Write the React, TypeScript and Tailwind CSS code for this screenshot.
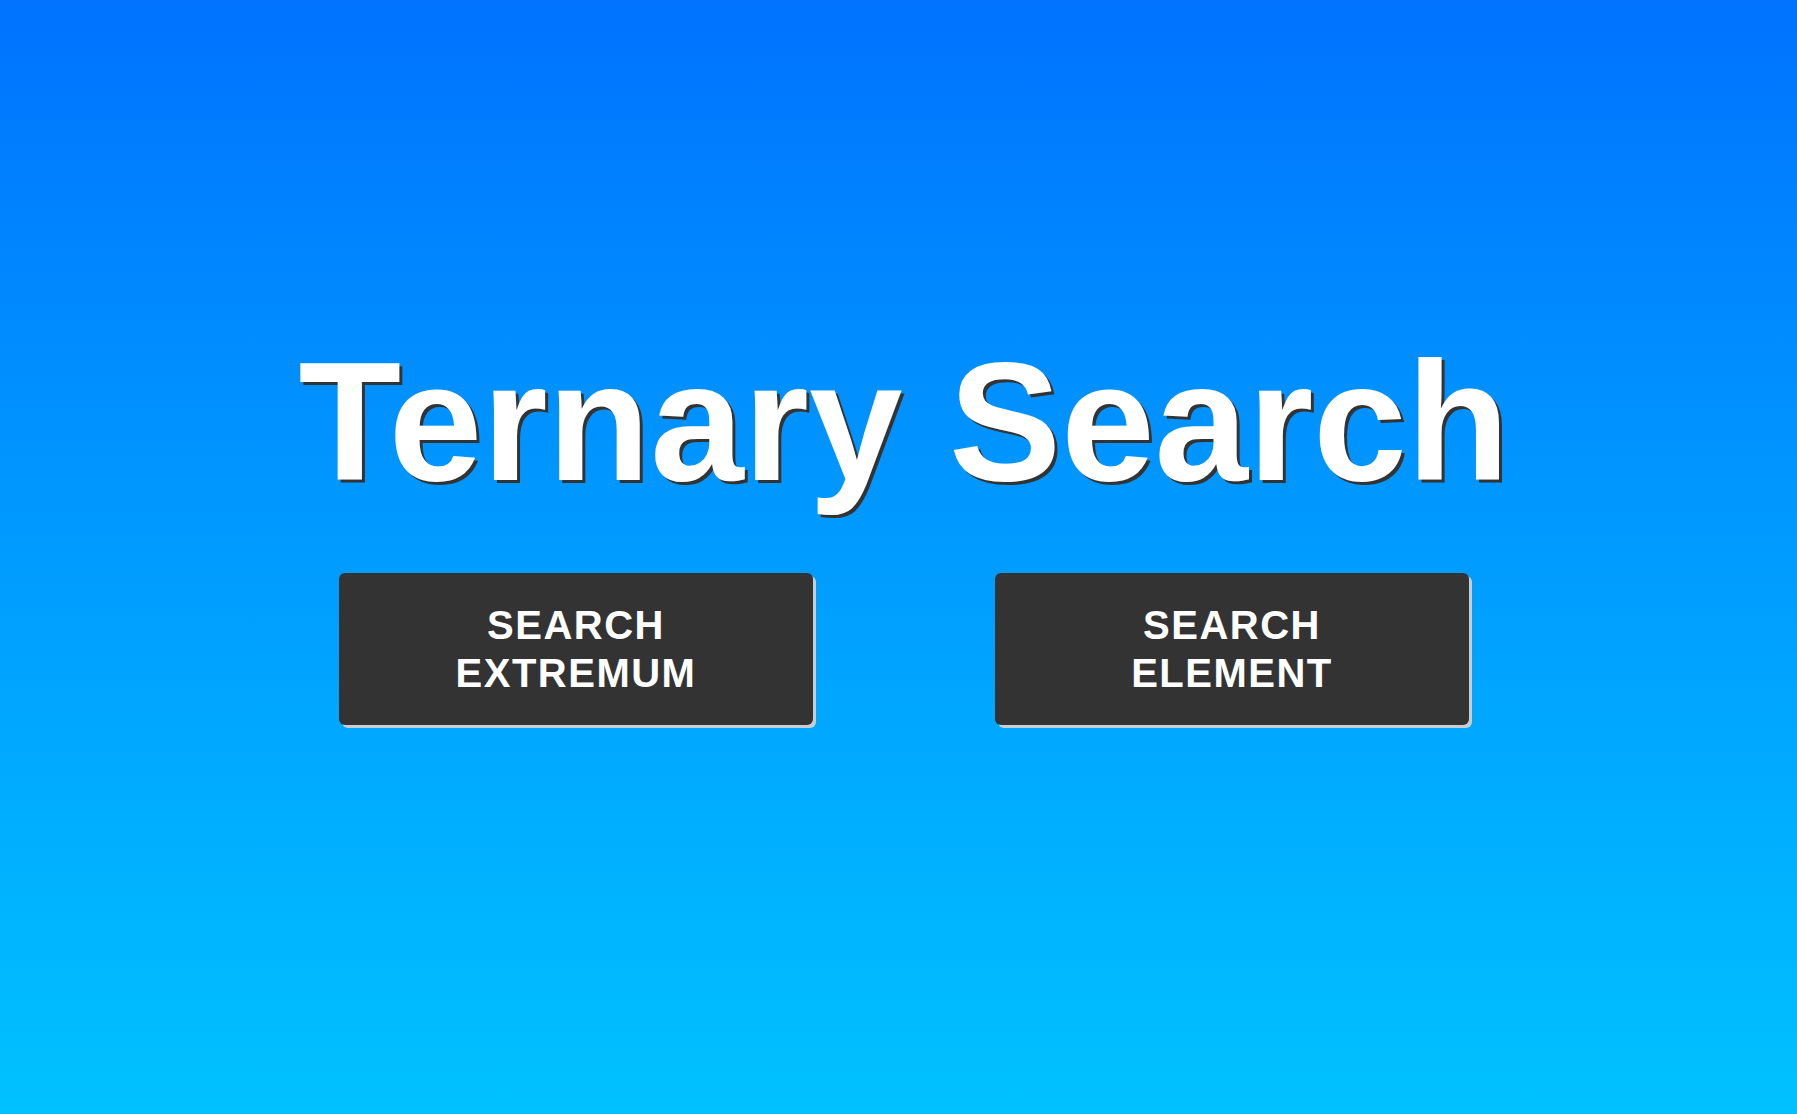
import React from 'react'

const MenuButton = ({ label }: { label: string }) => {
  return (
    <button
      type="button"
      className="w-[474px] h-[152px] rounded-[6px] bg-[#333333] text-white text-[40px] leading-[48px] font-bold tracking-[1.5px] shadow-[3px_3px_0_#c8cdd2] flex items-center justify-center"
    >
      <span className="whitespace-pre-line">{label}</span>
    </button>
  )
}

const App = () => {
  return (
    <div
      className="w-full min-h-screen h-[1114px] bg-gradient-to-b from-[#0072ff] to-[#00c2ff] flex flex-col items-center pt-[326px]"
      style={{ fontFamily: '"Liberation Sans", Arial, sans-serif' }}
    >
      <h1 className="text-white font-bold text-[168px] leading-[193px] [text-shadow:3px_3px_0_#333333] ml-[11px]">
        Ternary Search
      </h1>
      <div className="flex gap-[182px] mt-[54px] ml-[11px]">
        <MenuButton label={'SEARCH\nEXTREMUM'} />
        <MenuButton label={'SEARCH\nELEMENT'} />
      </div>
    </div>
  )
}

export default App
